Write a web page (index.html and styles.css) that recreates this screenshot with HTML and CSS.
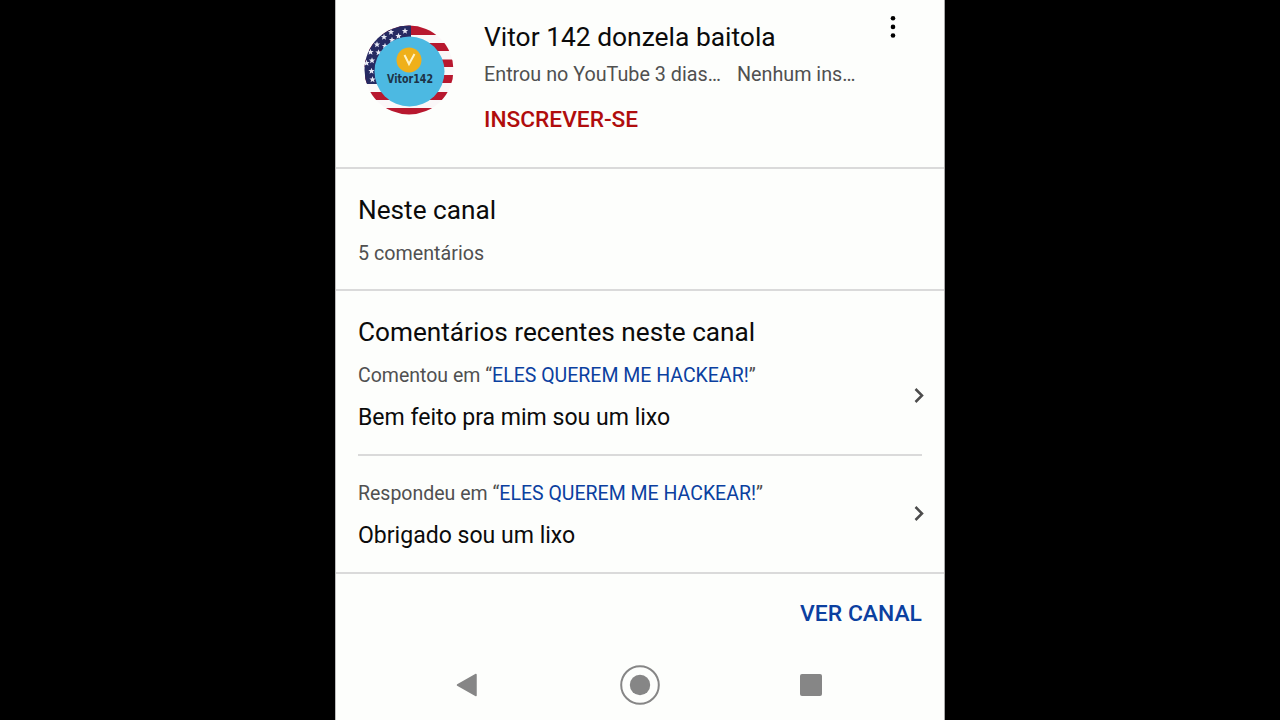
FILE: index.html
```html
<!DOCTYPE html>
<html lang="pt-BR">
<head>
    <meta charset="UTF-8">
    <meta name="viewport" content="width=device-width, initial-scale=1.0">
    <title>Vitor 142 donzela baitola</title>
    <link rel="stylesheet" href="styles.css">
</head>
<body>
    <div class="screen">
        <header class="profile">
            <svg class="avatar" viewBox="0 0 90 90">
                <defs>
                    <clipPath id="round"><circle cx="45" cy="45" r="44.5"/></clipPath>
                </defs>
                <g clip-path="url(#round)">
                    <rect width="90" height="90" fill="#fbf7f8"/>
                    <g fill="#b8182f">
                        <rect width="90" height="10"/>
                        <rect y="18" width="90" height="8"/>
                        <rect y="34.5" width="90" height="7.5"/>
                        <rect y="50" width="90" height="8"/>
                        <rect y="67" width="90" height="8"/>
                        <rect y="83" width="90" height="7"/>
                    </g>
                    <rect width="47" height="59" fill="#262a62"/>
                    <g id="stars" fill="#e6e8f4"></g>
                </g>
                <circle cx="45.5" cy="46.5" r="35" fill="#4cb9e2"/>
                <circle cx="45" cy="35" r="12.5" fill="#efb01a"/>
                <path d="M40.5 30l4.500 9 5.500-10" fill="none" stroke="#fff3c4" stroke-width="2"/>
                <text class="avatar-name" x="23" y="58" textLength="46" lengthAdjust="spacingAndGlyphs">Vitor142</text>
            </svg>
            <div class="profile-info">
                <h1>Vitor 142 donzela baitola</h1>
                <div class="meta"><span>Entrou no YouTube 3 dias…</span><span>Nenhum ins…</span></div>
                <div class="subscribe">INSCREVER-SE</div>
            </div>
            <svg class="menu" viewBox="0 0 6 24">
                <circle cx="3" cy="3.2" r="2.3"/>
                <circle cx="3" cy="11.9" r="2.3"/>
                <circle cx="3" cy="20.5" r="2.3"/>
            </svg>
        </header>

        <section class="channel">
            <h2>Neste canal</h2>
            <p class="small count">5 comentários</p>
        </section>

        <section class="recent">
            <h2>Comentários recentes neste canal</h2>
            <div class="comment">
                <div>
                    <p class="small">Comentou em “<a>ELES QUEREM ME HACKEAR!</a>”</p>
                    <p class="comment-text">Bem feito pra mim sou um lixo</p>
                </div>
                <svg class="arrow" viewBox="0 0 10 16"><path d="M1.500 2l6.500 6.500-6.500 6.500"/></svg>
            </div>
            <div class="comment">
                <div>
                    <p class="small">Respondeu em “<a>ELES QUEREM ME HACKEAR!</a>”</p>
                    <p class="comment-text">Obrigado sou um lixo</p>
                </div>
                <svg class="arrow" viewBox="0 0 10 16"><path d="M1.500 2l6.500 6.500-6.500 6.500"/></svg>
            </div>
        </section>

        <div class="see-channel">VER CANAL</div>

        <nav class="android-nav">
            <svg width="24" height="26" viewBox="0 0 24 26"><path d="M1.500 13L20 2.500v21z" stroke-width="1.500" stroke-linejoin="round"/></svg>
            <svg width="40" height="40" viewBox="0 0 40 40"><circle class="ring" cx="20" cy="20" r="18.800"/><circle cx="20" cy="20" r="10.200"/></svg>
            <svg width="22" height="22" viewBox="0 0 22 22"><rect width="22" height="22" rx="2"/></svg>
        </nav>
    </div>

    <script>
        // Stars on the avatar flag
        const stars = document.getElementById('stars');
        const points = [
            [41, 6], [27, 7], [34.5, 11], [20, 12], [28, 15], [13, 19.5], [21, 21],
            [6.5, 27], [14.5, 27.5], [8, 35.5], [2.5, 38], [7.5, 46], [8.5, 54.5]
        ];

        points.forEach(([x, y]) => {
            const star = document.createElementNS('http://www.w3.org/2000/svg', 'path');
            star.setAttribute('d', 'M0-2.600L.7-.9 2.500-.8 1.100.4 1.600 2.200 0 1.200-1.600 2.200-1.100.4-2.500-.8-.7-.9z');
            star.setAttribute('transform', `translate(${x} ${y}) scale(1.250)`);
            stars.appendChild(star);
        });
    </script>
</body>
</html>
```
FILE: styles.css
```css
body {
    margin: 0;
    background-color: #000000;
    font-family: Roboto, "Liberation Sans", sans-serif;
    color: #0b0b0b;
    overflow: hidden;
}
h1, h2, p {
    margin: 0;
    font-weight: 400;
    white-space: nowrap;
}
h1, h2 {
    font-size: 26.2px;
    line-height: 32px;
}
.screen {
    display: flex;
    flex-direction: column;
    box-sizing: border-box;
    width: 610px;
    height: 720px;
    margin: 0 auto;
    background-color: #fdfefc;
    border-left: 1px solid #bdbdbd;
    border-right: 1px solid #a8a8a8;
}
.profile {
    display: flex;
    box-sizing: border-box;
    height: 169px;
    padding: 21px 48px 0 28px;
    border-bottom: 2px solid #dadada;
}
.avatar {
    width: 90px;
    height: 90px;
    margin-top: 4px;
}
.avatar-name {
    font-family: "DejaVu Sans", sans-serif;
    font-size: 11.5px;
    font-weight: 700;
    fill: #1d3347;
}
.profile-info {
    flex: 1;
    margin-left: 30px;
}
h1 {
    font-size: 26.4px;
}
.meta {
    display: flex;
    gap: 16px;
    margin-top: 9px;
    font-size: 19.75px;
    line-height: 25px;
    color: #505050;
    white-space: nowrap;
}
.subscribe {
    margin-top: 19px;
    font-size: 22.7px;
    font-weight: 500;
    line-height: 28px;
    color: #b00d0d;
}
.menu {
    width: 6px;
    height: 24px;
    margin-top: -6px;
}
.channel {
    box-sizing: border-box;
    height: 122px;
    padding: 25px 22px 0;
    border-bottom: 2px solid #dadada;
}
.small {
    font-size: 19.5px;
    line-height: 24px;
    color: #505050;
}
.small a {
    color: #0b40a0;
}
.count {
    margin-top: 16px;
    font-size: 19.7px;
}
.recent {
    box-sizing: border-box;
    height: 283px;
    padding: 25px 22px 0;
    border-bottom: 2px solid #dadada;
}
.comment {
    display: flex;
    align-items: center;
    justify-content: space-between;
    padding: 16px 0 22px;
}
.comment + .comment {
    border-top: 2px solid #dadada;
    padding-top: 26px;
}
.comment-text {
    margin-top: 16px;
    font-size: 23.05px;
    line-height: 28px;
}
.arrow {
    width: 10px;
    height: 16px;
    margin-right: -2px;
    margin-bottom: 6px;
    fill: none;
    stroke: #4c4c4c;
    stroke-width: 2.5;
}
.see-channel {
    padding: 26px 22px 0;
    font-size: 22.9px;
    font-weight: 500;
    line-height: 28px;
    color: #0b40a0;
    text-align: right;
}
.android-nav {
    display: flex;
    align-items: center;
    justify-content: space-between;
    margin-top: 37px;
    padding: 0 122px 0 120px;
    fill: #868686;
    stroke: none;
}
.android-nav path {
    stroke: #868686;
}
.android-nav .ring {
    fill: none;
    stroke: #868686;
    stroke-width: 2;
}
```
